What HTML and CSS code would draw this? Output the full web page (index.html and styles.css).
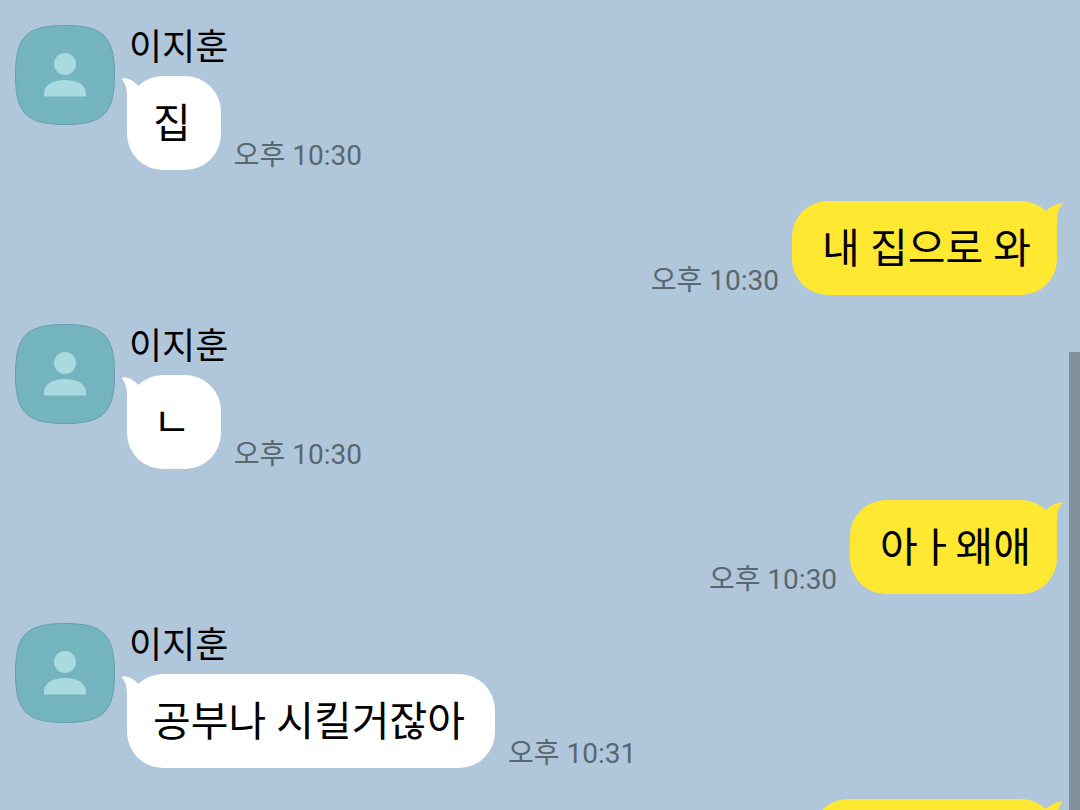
FILE: index.html
```html
<!DOCTYPE html>
<html lang="ko">
<head>
    <meta charset="UTF-8">
    <meta name="viewport" content="width=device-width, initial-scale=1.0">
    <title>이지훈</title>
    <link rel="stylesheet" href="styles.css">
</head>
<body>
    <!-- shared shapes -->
    <svg class="shapes" aria-hidden="true">
        <symbol id="avatar" viewBox="0 0 100 100">
            <path class="avatar-bg" d="M50 .5C88.500 .5 99.500 11.500 99.500 50S88.500 99.500 50 99.500 .5 88.500 .5 50 11.500 .5 50 .5z"/>
            <circle class="avatar-person" cx="50" cy="39" r="11"/>
            <path class="avatar-person" d="M29 71.500v-3C29 60 38 55 50 55s21 5 21 13.500v3z"/>
        </symbol>
        <symbol id="tail" viewBox="0 0 24 36">
            <path d="M0 1.500C0 .3 1 0 2.500 .3C8 1 12 3.500 16 7.500L24 16V36H5V18C5 11 3.500 6 0 1.500z"/>
        </symbol>
        <symbol id="tail-sent" viewBox="0 0 24 36">
            <path d="M24 .3C17 .8 12 3.500 7.500 7.500L0 16V36H18V18C18 10 20 5 24 .3z"/>
        </symbol>
    </svg>

    <main class="chat">
        <div class="message received">
            <svg class="avatar" aria-hidden="true"><use href="#avatar"/></svg>
            <div class="content">
                <h2 class="name">이지훈</h2>
                <div class="line">
                    <p class="bubble">집<svg class="tail" aria-hidden="true"><use href="#tail"/></svg></p>
                    <time class="time">오후 10:30</time>
                </div>
            </div>
        </div>

        <div class="message sent">
            <div class="line">
                <time class="time">오후 10:30</time>
                <p class="bubble">내 집으로 와<svg class="tail" aria-hidden="true"><use href="#tail-sent"/></svg></p>
            </div>
        </div>

        <div class="message received">
            <svg class="avatar" aria-hidden="true"><use href="#avatar"/></svg>
            <div class="content">
                <h2 class="name">이지훈</h2>
                <div class="line">
                    <p class="bubble">ㄴ<svg class="tail" aria-hidden="true"><use href="#tail"/></svg></p>
                    <time class="time">오후 10:30</time>
                </div>
            </div>
        </div>

        <div class="message sent">
            <div class="line">
                <time class="time">오후 10:30</time>
                <p class="bubble">아ㅏ왜애<svg class="tail" aria-hidden="true"><use href="#tail-sent"/></svg></p>
            </div>
        </div>

        <div class="message received">
            <svg class="avatar" aria-hidden="true"><use href="#avatar"/></svg>
            <div class="content">
                <h2 class="name">이지훈</h2>
                <div class="line">
                    <p class="bubble">공부나 시킬거잖아<svg class="tail" aria-hidden="true"><use href="#tail"/></svg></p>
                    <time class="time">오후 10:31</time>
                </div>
            </div>
        </div>

        <div class="message sent">
            <div class="line">
                <p class="bubble bubble-next">&nbsp;<svg class="tail" aria-hidden="true"><use href="#tail-sent"/></svg></p>
            </div>
        </div>
    </main>

    <div class="scroll-thumb"></div>
</body>
</html>
```
FILE: styles.css
```css
* {
    box-sizing: border-box;
}

body {
    margin: 0;
    height: 100vh;
    overflow: hidden;
    background-color: #b0c6da;
    color: #000;
    font-family: Roboto, "Noto Sans CJK KR", sans-serif;
}

.shapes {
    position: absolute;
    width: 0;
    height: 0;
}

.chat {
    height: 100%;
    overflow: hidden;
    padding: 25px 23px 0 15px;
}

.message {
    display: flex;
}

.received {
    gap: 12px;
    margin-bottom: 31px;
}

.sent {
    justify-content: flex-end;
    margin-bottom: 29px;
}

.avatar {
    flex: none;
    width: 100px;
    height: 100px;
}

.avatar-bg {
    fill: #74b4bf;
    stroke: #679fae;
}

.avatar-person {
    fill: #a9dae0;
}

.name {
    margin: 0;
    padding: 2px 2px 7px;
    font-size: 36px;
    font-weight: 400;
    line-height: 42px;
}

.line {
    display: flex;
    align-items: flex-end;
    gap: 13px;
}

.bubble {
    position: relative;
    margin: 0;
    padding: 23px 30px 21px 26px;
    border-radius: 36px;
    background-color: #fff;
    font-size: 41px;
    line-height: 50px;
}

.sent .bubble {
    padding-right: 26px;
    padding-left: 30px;
    background-color: #fee832;
}

.sent .bubble-next {
    min-width: 245px;
}

.tail {
    position: absolute;
    top: 2px;
    left: -5px;
    width: 24px;
    height: 36px;
    fill: #fff;
}

.sent .tail {
    left: auto;
    right: -6px;
    fill: #fee832;
}

.time {
    color: #59676f;
    font-size: 28px;
    line-height: 28px;
}

/* scroll bar thumb over the right edge */
.scroll-thumb {
    position: fixed;
    top: 352px;
    right: 0;
    bottom: 0;
    width: 11px;
    background-color: #80909c;
}
```
